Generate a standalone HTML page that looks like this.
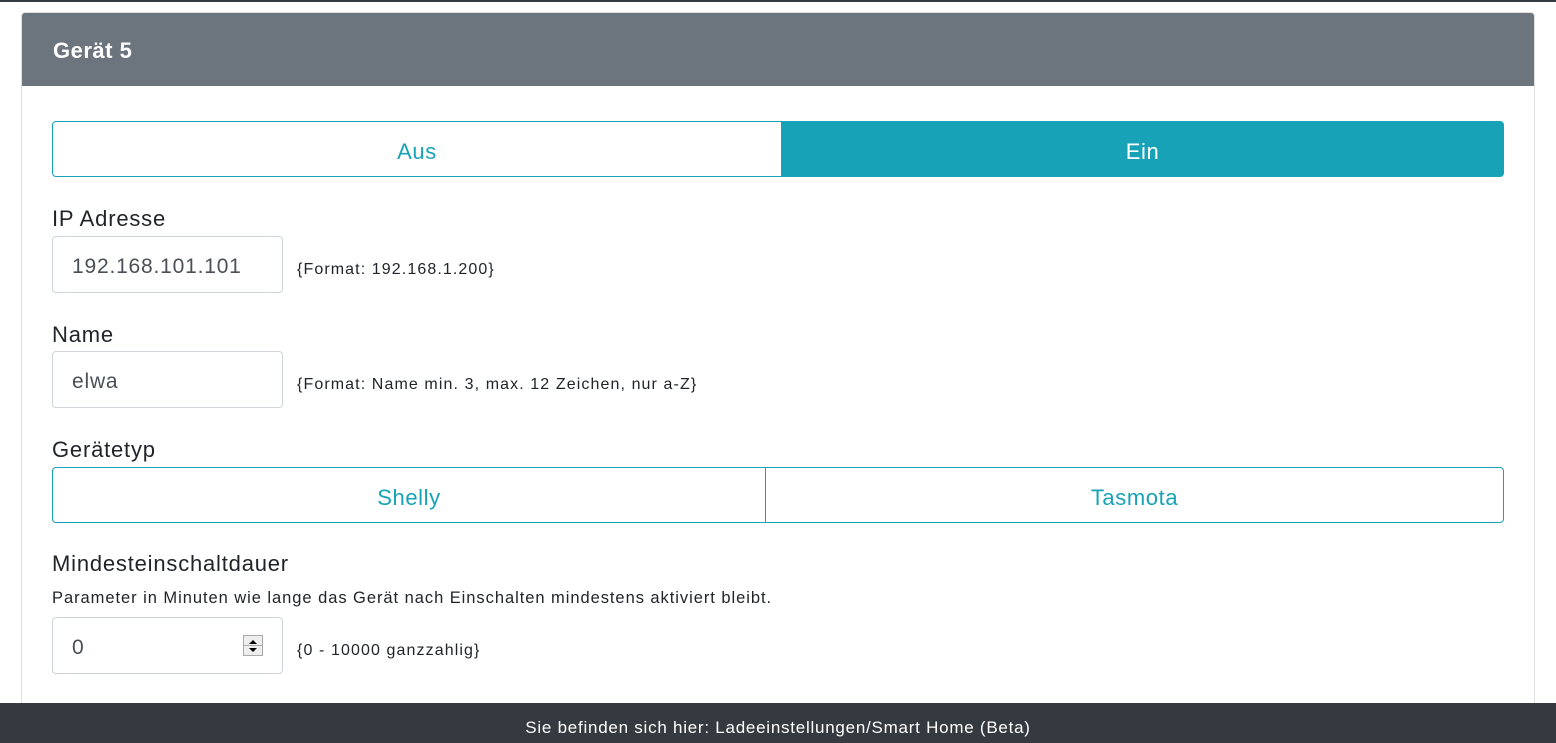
<!DOCTYPE html>
<html><head><meta charset="utf-8"><style>
*{box-sizing:border-box;margin:0;padding:0}
body{width:1556px;height:743px;overflow:hidden;background:#fff;font-family:"Liberation Sans",sans-serif;color:#212529;position:relative}
.top{position:absolute;left:0;top:0;width:1556px;height:2px;background:#343a40}
.card{position:absolute;left:21px;top:12px;width:1514px;height:720px;border:1px solid #dfdfdf;border-radius:4px;overflow:hidden}
.hdr{height:73px;background:#6c757d;color:#fff;font-weight:bold;font-size:22px;letter-spacing:0.5px;padding:25px 0 0 31px}
.abs{position:absolute;white-space:nowrap}
.btn{position:absolute;display:flex;align-items:center;justify-content:center;font-size:22px;letter-spacing:0.6px;color:#17a2b8;border:1px solid #17a2b8;padding-top:6px}
.lbl{position:absolute;left:52px;font-size:22px;letter-spacing:0.8px;white-space:nowrap}
.inp{position:absolute;left:52px;width:231px;height:57px;border:1px solid #ced4da;border-radius:4px;font-size:21px;letter-spacing:0.8px;color:#495057;padding:18px 0 0 19px}
.hint{position:absolute;left:297px;font-size:16px;letter-spacing:1.1px;white-space:nowrap}
.foot{position:absolute;left:0;top:703px;width:1556px;height:40px;background:#343a40;color:#fff;font-size:17px;letter-spacing:0.75px;text-align:center;padding-top:15px}
</style></head><body>
<div class="top"></div>
<div class="card"><div class="hdr">Gerät 5</div></div>
<div class="btn" style="left:52px;top:121px;width:730px;height:56px;border-radius:4px 0 0 4px">Aus</div>
<div class="btn" style="left:781px;top:121px;width:723px;height:56px;border-radius:0 4px 4px 0;background:#17a2b8;color:#fff">Ein</div>
<div class="lbl" style="top:206px">IP Adresse</div>
<div class="inp" style="top:236px">192.168.101.101</div>
<div class="hint" style="top:261px">{Format: 192.168.1.200}</div>
<div class="lbl" style="top:322px">Name</div>
<div class="inp" style="top:351px">elwa</div>
<div class="hint" style="top:376px">{Format: Name min. 3, max. 12 Zeichen, nur a-Z}</div>
<div class="lbl" style="top:437px">Gerätetyp</div>
<div class="btn" style="left:52px;top:467px;width:714px;height:56px;border-radius:4px 0 0 4px">Shelly</div>
<div class="btn" style="left:765px;top:467px;width:739px;height:56px;border-radius:0 4px 4px 0">Tasmota</div>
<div class="lbl" style="top:551px">Mindesteinschaltdauer</div>
<div class="abs" style="left:52px;top:589px;font-size:16.5px;letter-spacing:0.95px">Parameter in Minuten wie lange das Gerät nach Einschalten mindestens aktiviert bleibt.</div>
<div class="inp" style="top:617px">0</div>
<div class="abs" style="left:243px;top:635px;width:20px;height:21px;border:1px solid #aaa;background:#eee">
<svg width="18" height="19" viewBox="0 0 18 19"><path d="M5 8L9 4L13 8Z" fill="#000"/><line x1="0" y1="9.5" x2="18" y2="9.5" stroke="#aaa"/><path d="M5 12L9 16L13 12Z" fill="#000"/></svg></div>
<div class="hint" style="top:642px">{0 - 10000 ganzzahlig}</div>
<div class="foot">Sie befinden sich hier: Ladeeinstellungen/Smart Home (Beta)</div>
</body></html>
